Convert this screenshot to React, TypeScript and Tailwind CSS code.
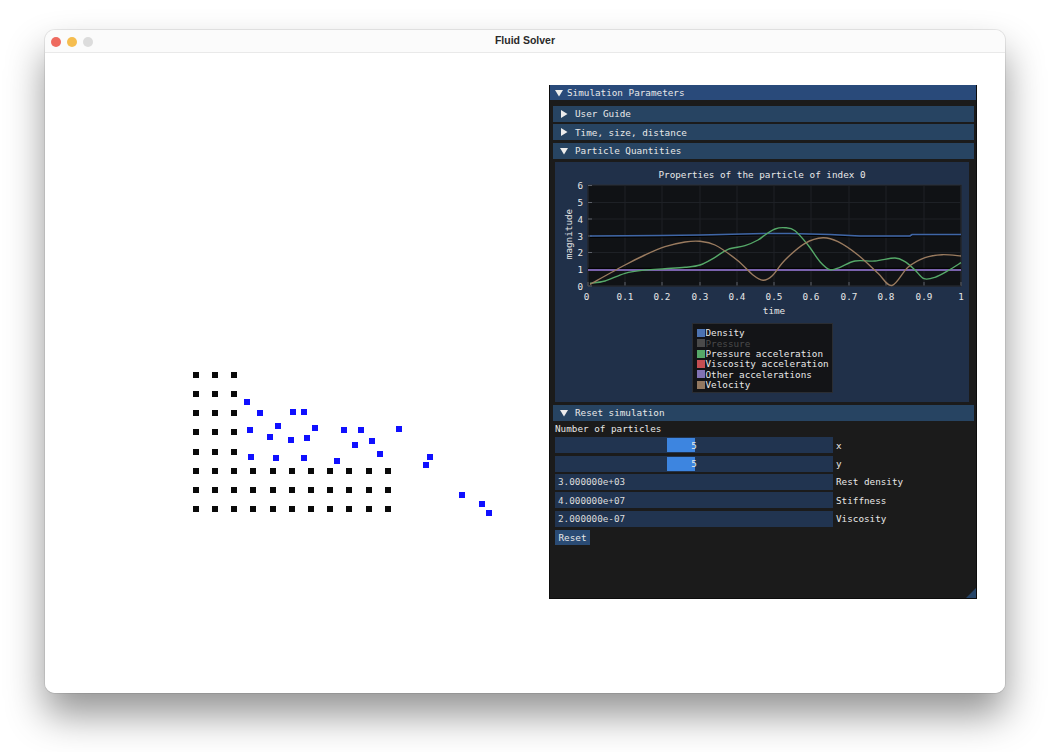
const blackDots: [number, number][] = [];
const colX = [196, 215, 234, 253, 273, 292, 311, 330, 349, 369, 388];
const rowY = [375, 394, 413, 432, 451.5, 471, 490, 509];
rowY.forEach((y, r) => {
  colX.forEach((x, c) => {
    if (r >= 5 || c < 3) blackDots.push([x, y]);
  });
});

const blueDots: [number, number][] = [
  [246.5, 401.5], [260, 413], [292.5, 412], [304, 412], [277.5, 426], [315, 427.5], [343.5, 429.5],
  [250, 430], [269.5, 436.5], [290.5, 440], [307, 438], [251, 456.5], [276, 458], [303.5, 458],
  [336.5, 460.5], [360.5, 429.5], [398.5, 428.5], [372, 440.5], [354.5, 444.5], [379.5, 454],
  [430, 457], [425.5, 464.5], [461.5, 495], [482, 503.5], [489, 512.5],
];

const green: [number, number][] = [
  [590, 283.3], [605, 281], [625, 273.3], [645, 270], [665, 268.7], [685, 267.3], [700, 265], [715, 257.3],
  [728, 249.3], [745, 245.7], [758, 240], [765, 235], [775, 229], [785, 227.7], [795, 230.7], [808, 245],
  [820, 261.7], [830, 269.7], [840, 267.3], [855, 261], [875, 261], [895, 258], [905, 261.7], [915, 270],
  [924, 278.7], [935, 277.3], [948, 270.7], [961, 262.7],
];

const brown: [number, number][] = [
  [590, 284.3], [625, 265], [645, 255], [665, 246.7], [685, 242], [700, 241.3], [715, 245], [737, 260],
  [753, 275], [763, 280.3], [772, 276], [785, 260], [805, 243.3], [823, 237.7], [838, 241.7], [858, 255],
  [878, 273.3], [892, 285.5], [908, 267.3], [925, 257.7], [942, 254.7], [961, 256],
];

const density = "M590 236 L660 235.5 L700 235 L765 233.5 L790 233.5 L830 234.5 L860 236 L910 236 L912 234.5 L961 234.5";

// catmull-rom through the sampled points so curves stay smooth
const smooth = (pts: [number, number][]) => {
  let d = `M${pts[0][0]} ${pts[0][1]}`;
  for (let i = 0; i < pts.length - 1; i++) {
    const p0 = pts[Math.max(i - 1, 0)];
    const p1 = pts[i];
    const p2 = pts[i + 1];
    const p3 = pts[Math.min(i + 2, pts.length - 1)];
    const c1x = p1[0] + (p2[0] - p0[0]) / 6;
    const c1y = p1[1] + (p2[1] - p0[1]) / 6;
    const c2x = p2[0] - (p3[0] - p1[0]) / 6;
    const c2y = p2[1] - (p3[1] - p1[1]) / 6;
    d += ` C${c1x} ${c1y} ${c2x} ${c2y} ${p2[0]} ${p2[1]}`;
  }
  return d;
};

const xTicks = [
  { x: 588, label: "0" }, { x: 625, label: "0.1" }, { x: 662, label: "0.2" }, { x: 700, label: "0.3" },
  { x: 737, label: "0.4" }, { x: 774, label: "0.5" }, { x: 811, label: "0.6" }, { x: 849, label: "0.7" },
  { x: 886, label: "0.8" }, { x: 924, label: "0.9" }, { x: 961, label: "1" },
];
const yTicks = [
  { y: 286, label: "0" }, { y: 269.5, label: "1" }, { y: 252.5, label: "2" }, { y: 236, label: "3" },
  { y: 219, label: "4" }, { y: 202.5, label: "5" }, { y: 185.5, label: "6" },
];

const legend = [
  { name: "Density", swatch: "bg-[#4c72b0]", text: "text-[#e8e8e8]" },
  { name: "Pressure", swatch: "bg-[#4a4a4a]", text: "text-[#4a4a4a]" },
  { name: "Pressure acceleration", swatch: "bg-[#55a868]", text: "text-[#e8e8e8]" },
  { name: "Viscosity acceleration", swatch: "bg-[#c44e52]", text: "text-[#e8e8e8]" },
  { name: "Other accelerations", swatch: "bg-[#8172b3]", text: "text-[#e8e8e8]" },
  { name: "Velocity", swatch: "bg-[#937860]", text: "text-[#e8e8e8]" },
];

const Arrow = ({ open }: { open: boolean }) => (
  <svg width="8" height="8" viewBox="0 0 8 8" className="shrink-0">
    <path d={open ? "M0 1 L8 1 L4 7.5 Z" : "M1 0 L7.5 4 L1 8 Z"} fill="#ececec" />
  </svg>
);

const Header = ({ label, open = false, className = "" }: { label: string; open?: boolean; className?: string }) => (
  <div className={`flex h-[16px] items-center gap-[7px] bg-[#274462] pl-[7px] ${className}`}>
    <Arrow open={open} />
    <span>{label}</span>
  </div>
);

const Slider = ({ label }: { label: string }) => (
  <div className="mt-[2.4px] flex h-[16px] items-center">
    <div className="relative flex h-full w-[278px] items-center justify-center bg-[#213450]">
      <div className="absolute left-[112px] top-[1px] bottom-[1px] w-[28px] bg-[#3d85e0]" />
      <span className="relative">5</span>
    </div>
    <span className="ml-[3px]">{label}</span>
  </div>
);

const Field = ({ value, label }: { value: string; label: string }) => (
  <div className="mt-[2.4px] flex h-[16px] items-center">
    <div className="flex h-full w-[278px] items-center bg-[#213450] pl-[3px] text-[#dcdcdc]">{value}</div>
    <span className="ml-[3px]">{label}</span>
  </div>
);

const Chart = () => (
  <svg width="414" height="140" viewBox="555 180 414 140" className="block" fontSize="9.3" fill="#e6e6e6">
    <rect x="588" y="185" width="373" height="101" fill="#101215" stroke="#2b2f36" />
    {xTicks.map(t => (
      <g key={t.label}>
        <line x1={t.x} x2={t.x} y1="185" y2="286" stroke="#1e2126" />
        <line x1={t.x} x2={t.x} y1="282" y2="286" stroke="#5c6068" />
        <text x={t.x === 588 ? 586.5 : t.x} y="299.5" textAnchor="middle">{t.label}</text>
      </g>
    ))}
    {yTicks.map(t => (
      <g key={t.label}>
        <line x1="588" x2="961" y1={t.y} y2={t.y} stroke="#1e2126" />
        <line x1="588" x2="592" y1={t.y} y2={t.y} stroke="#5c6068" />
        <text x="583" y={t.y + 3.5} textAnchor="end">{t.label}</text>
      </g>
    ))}
    <path d={density} transform="translate(0 1.4)" fill="none" stroke="#000" strokeWidth="1" />
    <path d={density} fill="none" stroke="#3f66a6" strokeWidth="1.6" />
    <line x1="588" x2="961" y1="268.3" y2="268.3" stroke="#000" />
    <line x1="588" x2="961" y1="270" y2="270" stroke="#7a62ad" strokeWidth="2" />
    <path d={smooth(green)} fill="none" stroke="#55a868" strokeWidth="1.4" />
    <path d={smooth(brown)} fill="none" stroke="#9a7b5f" strokeWidth="1.4" />
    <text x="774" y="313.5" textAnchor="middle">time</text>
    <text x="572" y="234" textAnchor="middle" transform="rotate(-90 572 234)">magnitude</text>
  </svg>
);

const Panel = () => (
  <div className="absolute left-[504px] top-[32px] h-[514px] w-[428px] overflow-hidden border-x border-b border-[#0c0c0c] bg-[#1b1b1b] font-['DejaVu_Sans_Mono',monospace] text-[9.3px] leading-none text-[#e8e8e8]">
    <div className="flex h-[15px] items-center gap-[4px] bg-[#294a7a] pl-[5px]">
      <Arrow open />
      <span>Simulation Parameters</span>
    </div>
    <div className="pl-[3px] pr-[2px]">
      <Header label="User Guide" className="mt-[6px]" />
      <Header label="Time, size, distance" className="mt-[2.4px]" />
      <Header label="Particle Quantities" open className="mt-[2.4px]" />
      <div className="ml-[2px] mr-[5px] mt-[3px] flex h-[240px] flex-col items-center bg-[#203049] pt-[7px]">
        <div className="flex h-[11px] items-center">Properties of the particle of index 0</div>
        <Chart />
        <div className="mt-[3px] flex h-[70px] w-[141px] flex-col justify-center border border-[#2a2d33] bg-[#131417] pl-[4px] pt-[2px]">
          {legend.map(item => (
            <div key={item.name} className="flex h-[10.35px] items-center gap-[1px]">
              <span className={`h-[8px] w-[8px] ${item.swatch}`} />
              <span className={item.text}>{item.name}</span>
            </div>
          ))}
        </div>
      </div>
      <Header label="Reset simulation" open className="mt-[3px]" />
      <div className="ml-[2px]">
        <div className="flex h-[14px] items-center pt-[2px]">Number of particles</div>
        <Slider label="x" />
        <Slider label="y" />
        <Field value="3.000000e+03" label="Rest density" />
        <Field value="4.000000e+07" label="Stiffness" />
        <Field value="2.000000e-07" label="Viscosity" />
        <div className="mt-[3px] flex h-[15px] w-[35px] items-center justify-center bg-[#2a4b74]">Reset</div>
      </div>
    </div>
    <svg width="10" height="10" viewBox="0 0 10 10" className="absolute bottom-0 right-0">
      <path d="M10 0 L10 10 L0 10 Z" fill="#264568" />
    </svg>
  </div>
);

export default function App() {
  return (
    <div className="h-[752px] w-[1050px] overflow-hidden bg-white pl-[45px] pt-[30px]">
      <div className="flex h-[663px] w-[960px] flex-col overflow-hidden rounded-[10px] bg-white shadow-[0_22px_38px_rgba(0,0,0,0.42),0_0_0_1px_rgba(0,0,0,0.08)]">
        <div className="relative flex h-[23px] shrink-0 items-center justify-center border-b border-[#e9e9e9] bg-[#fbfbfb]">
          <div className="absolute left-[6px] top-[6.5px] flex gap-[6px]">
            <span className="h-[10px] w-[10px] rounded-full bg-[#ee6a5f]" />
            <span className="h-[10px] w-[10px] rounded-full bg-[#f5bd4f]" />
            <span className="h-[10px] w-[10px] rounded-full bg-[#dcdcdc]" />
          </div>
          <span className="font-['Liberation_Sans',sans-serif] text-[10.5px] font-bold text-[#2a2a2a]">Fluid Solver</span>
        </div>
        <div className="relative flex-1 bg-white">
          {blackDots.map(([x, y]) => (
            <div key={`${x}-${y}`} className="absolute h-[6px] w-[6px] bg-[#0a0a0a]" style={{ left: x - 48, top: y - 56 }} />
          ))}
          {blueDots.map(([x, y]) => (
            <div key={`${x}-${y}`} className="absolute h-[6px] w-[6px] bg-[#1010ff]" style={{ left: x - 48, top: y - 56 }} />
          ))}
          <Panel />
        </div>
      </div>
    </div>
  );
}
